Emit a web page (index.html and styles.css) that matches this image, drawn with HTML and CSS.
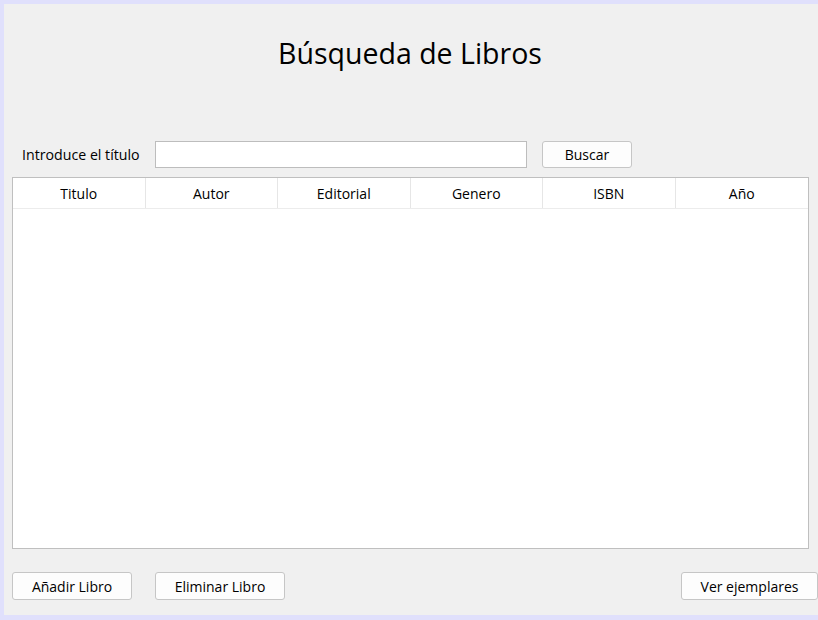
FILE: index.html
```html
<!DOCTYPE html>
<html lang="es">
<head>
<meta charset="utf-8">
<title>Búsqueda de Libros</title>
<link rel="stylesheet" href="styles.css">
</head>
<body>
<div class="frame">
  <h1 class="title">Búsqueda de Libros</h1>
  <div class="search-row">
    <label class="label" for="q">Introduce el título</label>
    <input id="q" class="input" type="text">
    <button class="btn btn-search">Buscar</button>
  </div>
  <div class="table">
    <div class="thead">
      <div class="th">Titulo</div>
      <div class="th">Autor</div>
      <div class="th">Editorial</div>
      <div class="th">Genero</div>
      <div class="th">ISBN</div>
      <div class="th">Año</div>
    </div>
  </div>
  <div class="bottom-row">
    <button class="btn btn-add">Añadir Libro</button>
    <button class="btn btn-del">Eliminar Libro</button>
    <button class="btn btn-view">Ver ejemplares</button>
  </div>
</div>
</body>
</html>
```
FILE: styles.css
```css
html, body {
  margin: 0;
  padding: 0;
  overflow: hidden;
}
body {
  width: 818px;
  height: 620px;
  font-family: "Open Sans", "Noto Sans", sans-serif;
  color: #000;
}
.frame {
  box-sizing: border-box;
  height: 620px;
  width: 818px;
  background: #f0f0f0;
  border-top: 4px solid #e0e0fc;
  border-left: 4px solid #e0e0fc;
  border-bottom: 5px solid #e0e0fc;
  padding-left: 8px;
}
.title {
  margin: 0;
  height: 100px;
  box-sizing: border-box;
  padding-top: 31px;
  padding-right: 10px;
  font-size: 28.5px;
  line-height: 36px;
  font-weight: 400;
  text-align: center;
}
.search-row {
  display: flex;
  align-items: center;
  height: 27px;
  margin-top: 37px;
}
.label {
  margin-left: 10px;
  width: 133px;
  font-size: 14.2px;
}
.input {
  box-sizing: border-box;
  width: 372px;
  height: 27px;
  margin: 0;
  border: 1px solid #bdbdbd;
  background: #fff;
  outline: none;
}
.btn {
  box-sizing: border-box;
  height: 28px;
  margin: 0;
  padding: 0;
  border: 1px solid #c6c6c6;
  border-radius: 3px;
  background: #fdfdfd;
  font-family: "Open Sans", "Noto Sans", sans-serif;
  font-size: 14px;
  color: #000;
}
.btn-search {
  margin-left: 15px;
  width: 90px;
  height: 27px;
}
.table {
  box-sizing: border-box;
  width: 797px;
  height: 372px;
  margin-top: 9px;
  border: 1px solid #bfbfbf;
  background: #fff;
}
.thead {
  display: grid;
  grid-template-columns: repeat(6, 1fr);
  height: 31px;
  border-bottom: 1px solid #ececec;
  box-sizing: border-box;
}
.th {
  display: flex;
  align-items: center;
  justify-content: center;
  font-size: 14px;
  border-right: 1px solid #e6e6e6;
}
.th:last-child {
  border-right: none;
}
.bottom-row {
  display: flex;
  margin-top: 23px;
}
.btn-add {
  width: 120px;
}
.btn-del {
  width: 130px;
  margin-left: 23px;
}
.btn-view {
  width: 137px;
  margin-left: auto;
  margin-right: 0;
}
```
